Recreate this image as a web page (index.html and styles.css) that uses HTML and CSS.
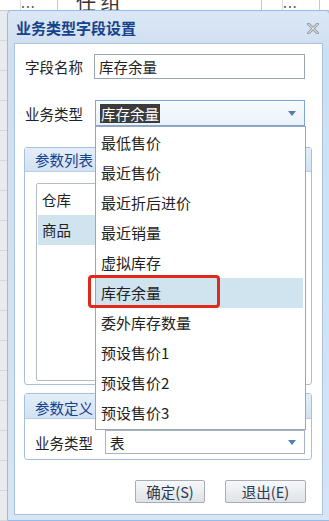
FILE: index.html
```html
<!DOCTYPE html>
<html lang="zh-CN">
  <head>
    <meta charset="UTF-8" />
    <title>业务类型字段设置</title>
    <link rel="stylesheet" href="styles.css">
  </head>
  <body>
    <div class="app">
      <div class="grid-head">
        <span class="cell dots">...</span>
        <span class="cell name">任 组</span>
        <span class="cell dots">...</span>
      </div>
      <div class="side"></div>
    </div>

    <div class="window">
      <div class="win-title">
        <span>业务类型字段设置</span>
        <svg class="win-close" width="12" height="11" viewBox="0 0 12 11">
          <path d="M1.5 1 L10.5 10 M10.5 1 L1.5 10" stroke="#9aa0a8" stroke-width="3" stroke-linecap="square" fill="none"/>
          <path d="M1.5 1 L10.5 10 M10.5 1 L1.5 10" stroke="#f4f6f8" stroke-width="1" fill="none"/>
        </svg>
      </div>

      <div class="win-body">
        <div class="form-row">
          <label>字段名称</label>
          <div class="field">库存余量</div>
        </div>
        <div class="form-row second">
          <label>业务类型</label>
          <div class="combo focus">
            <span class="selected">库存余量</span>
            <i class="trigger"></i>
          </div>
        </div>

        <div class="panel list-panel">
          <div class="panel-head">参数列表</div>
          <div class="panel-body">
            <ul class="listbox">
              <li>仓库</li>
              <li class="on">商品</li>
            </ul>
          </div>
        </div>

        <div class="panel def-panel">
          <div class="panel-head">参数定义</div>
          <div class="panel-body def-row">
            <label>业务类型</label>
            <div class="combo small">
              <span>表</span>
              <i class="trigger"></i>
            </div>
          </div>
        </div>

        <div class="buttons">
          <button class="btn ok">确定(S)</button>
          <button class="btn exit">退出(E)</button>
        </div>

        <ul class="dropdown">
          <li>最低售价</li>
          <li>最近售价</li>
          <li>最近折后进价</li>
          <li>最近销量</li>
          <li>虚拟库存</li>
          <li class="active">库存余量</li>
          <li>委外库存数量</li>
          <li>预设售价1</li>
          <li>预设售价2</li>
          <li>预设售价3</li>
        </ul>
        <div class="mark"></div>
      </div>
    </div>
  </body>
</html>
```

FILE: styles.css
```css
/* 业务类型字段设置 */
body {
  margin: 0;
  padding: 0;
  width: 329px;
  height: 521px;
  overflow: hidden;
  position: relative;
  background: #f2f4f7;
  font-family: "Noto Sans CJK SC", "Noto Sans", sans-serif;
  color: #222;
}

ul {
  list-style: none;
  margin: 0;
  padding: 0;
}

/* page behind the window */
.grid-head {
  height: 10px;
  display: flex;
  background: #fff;
  border-bottom: 1px solid #ccc;
  overflow: hidden;
  font-size: 14px;
  line-height: 4px;
}

.cell {
  border-right: 1px solid #c8c8c8;
  color: #555;
}

.cell.dots {
  width: 16px;
  margin-left: 20px;
  padding-right: 20px;
  border-left: 1px solid #ddd;
  letter-spacing: 1px;
}

.cell.name {
  width: 185px;
  padding-left: 18px;
  font-size: 20px;
  line-height: 0;
  padding-top: 2px;
  color: #333;
}

.side {
  width: 7px;
  height: 511px;
  background: repeating-linear-gradient(to bottom, #e9ecef 0, #e9ecef 29px, #d3d7dc 29px, #d3d7dc 30px);
}

/* window */
.window {
  position: absolute;
  left: 7px;
  top: 10px;
  width: 323px;
  height: 511px;
  box-sizing: border-box;
  border: 1px solid #99bbe8;
  border-radius: 4px 4px 0 0;
  background: linear-gradient(to bottom, #dbe7f5, #cfdff1 40px, #d6e4f4);
}

.win-title {
  height: 32px;
  display: flex;
  align-items: center;
  justify-content: space-between;
  padding: 0 10px 0 8px;
  color: #15428b;
  font-size: 15px;
  font-weight: bold;
}

.win-close {
  margin-top: 3px;
}

.win-body {
  position: relative;
  width: 309px;
  height: 472px;
  margin-left: 6px;
  box-sizing: border-box;
  padding: 10px 10px 0 9px;
  background: #fff;
  border: 1px solid #a9c3df;
  font-size: 14.5px;
}

.form-row {
  display: flex;
  align-items: center;
  padding-right: 7px;
}

.form-row.second {
  margin-top: 21px;
}

.form-row label {
  width: 70px;
  padding-left: 1px;
  box-sizing: border-box;
}

.field {
  flex: 1;
  height: 25px;
  box-sizing: border-box;
  border: 1px solid #9aa6b4;
  padding-left: 4px;
  line-height: 23px;
}

.combo {
  flex: 1;
  height: 26px;
  box-sizing: border-box;
  border: 1px solid #9bb6d3;
  padding-left: 4px;
  display: flex;
  align-items: center;
  justify-content: space-between;
  background: #fff;
}

.combo.focus {
  border-color: #7fa9d3;
  background: linear-gradient(to bottom, #f8fbfe, #e9f2fa);
  margin-left: 1px;
}

.selected {
  background: #3b3b3b;
  color: #fff;
  line-height: 19px;
  padding: 0 1px;
}

.trigger {
  width: 0;
  height: 0;
  border-left: 4px solid transparent;
  border-right: 4px solid transparent;
  border-top: 5px solid #4e7fb5;
  margin-right: 8px;
}

/* panels */
.panel {
  border: 1px solid #a8c0dc;
  border-radius: 3px;
}

.list-panel {
  margin-top: 21px;
  height: 238px;
  box-sizing: border-box;
}

.def-panel {
  margin-top: 8px;
  height: 67px;
  box-sizing: border-box;
}

.panel-head {
  height: 23px;
  line-height: 23px;
  padding-left: 10px;
  color: #15428b;
  background: linear-gradient(to bottom, #e4eef9, #d2e2f4);
  border-bottom: 1px solid #b8cde6;
  font-size: 14.5px;
}

.def-panel .panel-head {
  height: 24px;
  line-height: 27px;
}

.panel-body {
  padding: 11px 10px 0 11px;
}

.listbox {
  height: 198px;
  box-sizing: border-box;
  border: 1px solid #b5bcc6;
  border-radius: 2px;
  padding: 1px;
}

.listbox li {
  height: 30px;
  line-height: 30px;
  padding-left: 4px;
}

.listbox li.on {
  background: #cfe4ef;
}

.def-row {
  display: flex;
  align-items: center;
  padding: 11px 6px 0 10px;
}

.def-row label {
  width: 70px;
}

.combo.small {
  height: 24px;
  border-color: #a6b3c2;
}

/* buttons */
.buttons {
  display: flex;
  justify-content: flex-end;
  gap: 20px;
  margin-top: 20px;
  padding-right: 6px;
}

.btn {
  height: 23px;
  padding: 0;
  border: 1px solid #a6adb6;
  border-radius: 2px;
  background: linear-gradient(to bottom, #f7f8f9, #dfe3e7);
  font-family: inherit;
  font-size: 14.5px;
  color: #2b3a4e;
  line-height: 20px;
}

.btn.ok {
  width: 70px;
}

.btn.exit {
  width: 81px;
}

/* open list of the combo */
.dropdown {
  position: absolute;
  left: 80px;
  top: 82px;
  width: 211px;
  height: 304px;
  box-sizing: border-box;
  border: 1px solid #9aa6b4;
  background: #fff;
  padding: 1px 2px 0 0;
}

.dropdown li {
  height: 30px;
  line-height: 30px;
  padding-left: 5px;
  font-size: 15px;
}

.dropdown li.active {
  background: #cfe4ef;
}

.mark {
  position: absolute;
  left: 73px;
  top: 231px;
  width: 132px;
  height: 33px;
  box-sizing: border-box;
  border: 3px solid #e0281b;
  border-radius: 4px;
}
```
